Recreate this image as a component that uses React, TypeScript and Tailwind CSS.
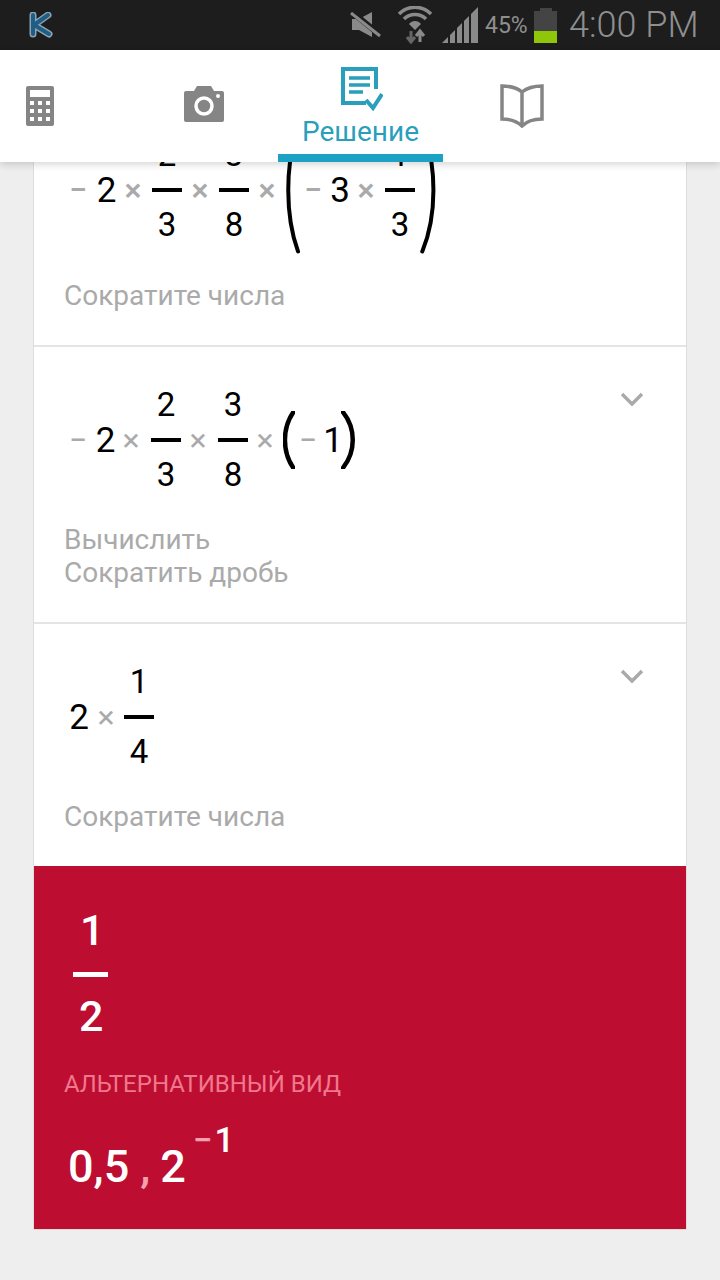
const Sym = ({ c, className = "" }: { c: string; className?: string }) => (
  <span className={`block shrink-0 text-center text-[32px] leading-none text-[#aaaaaa] ${className}`}>{c}</span>
)

const Num = ({ c, className = "" }: { c: string; className?: string }) => (
  <span className={`block shrink-0 text-center text-[35px] leading-none text-black ${className}`}>{c}</span>
)

const Frac = ({ top, bottom, className = "" }: { top: string; bottom: string; className?: string }) => (
  <div className={`flex w-[30px] shrink-0 flex-col items-center ${className}`}>
    <span className="h-[34px] text-[33px] leading-[34px] text-black">{top}</span>
    <div className="mt-4 h-1 w-full bg-black" />
    <span className="mt-4 h-[34px] text-[33px] leading-[34px] text-black">{bottom}</span>
  </div>
)

const Paren = ({ right, tall, className = "" }: { right?: boolean; tall?: boolean; className?: string }) => (
  <svg
    viewBox="0 0 14 100"
    preserveAspectRatio="none"
    className={`shrink-0 text-black ${tall ? "h-[128px]" : "h-[58px]"} ${className}`}
  >
    <path
      d={right ? "M2 2 C15 30 15 70 2 98" : "M12 2 C-1 30 -1 70 12 98"}
      fill="none"
      stroke="currentColor"
      strokeWidth={tall ? 4 : 4.5}
      strokeLinecap="round"
      vectorEffect="non-scaling-stroke"
    />
  </svg>
)

const Chevron = () => (
  <svg viewBox="0 0 24 15" className="absolute top-[45px] right-[42px] h-[15px] w-6 text-[#aaaaaa]">
    <path d="M2 2 L12 12 L22 2" fill="none" stroke="currentColor" strokeWidth="3.4" />
  </svg>
)

const Label = ({ lines }: { lines: string[] }) => (
  <div className="-ml-px text-[28px] leading-[33px] font-normal text-[#aaaaaa]">
    {lines.map((l) => (
      <div key={l}>{l}</div>
    ))}
  </div>
)

const StatusBar = () => (
  <div className="flex h-[50px] items-center bg-[#1d1d1d] pl-[28px] text-[#8f8f8f]">
    <svg viewBox="0 0 26 26" className="h-[26px] w-[26px]">
      <path
        d="M5 3 V22 M20 3 L6 13 L21 22"
        fill="none"
        stroke="#8aa4b4"
        strokeWidth="7"
        strokeLinecap="round"
        strokeLinejoin="round"
      />
      <path
        d="M5 3 V22 M20 3 L6 13 L21 22"
        fill="none"
        stroke="#1f5d85"
        strokeWidth="4"
        strokeLinecap="round"
        strokeLinejoin="round"
      />
    </svg>
    <svg viewBox="0 0 32 28" className="ml-[296px] h-7 w-8">
      <path d="M2 8 H9 L22 1 V26 L9 19 H2 Z" fill="#8a8a8a" />
      <path d="M2 1 L30 24" stroke="#1d1d1d" strokeWidth="6" />
      <path d="M1 2 L30 25" stroke="#8a8a8a" strokeWidth="3" />
    </svg>
    <svg viewBox="0 0 34 38" className="ml-4 h-[38px] w-[34px]">
      <path d="M1 8 C10 -1 24 -1 33 8" fill="none" stroke="#8a8a8a" strokeWidth="3.5" />
      <path d="M6 13 C12 7 22 7 28 13" fill="none" stroke="#8a8a8a" strokeWidth="3.5" />
      <path d="M11 18 C14 14 20 14 23 18 L17 24 Z" fill="#8a8a8a" />
      <path d="M13 25 V35 M9 31 L13 36 L17 31" fill="none" stroke="#666666" strokeWidth="3" />
      <path d="M22 36 V26 M18 30 L22 25 L26 30" fill="none" stroke="#8a8a8a" strokeWidth="3" />
    </svg>
    <svg viewBox="0 0 36 36" className="ml-[10px] h-9 w-9">
      <path d="M0 36 L6 30 V36 Z" fill="#8a8a8a" />
      <path d="M8 28 L13 23 V36 H8 Z" fill="#8a8a8a" />
      <path d="M15 21 L20 16 V36 H15 Z" fill="#8a8a8a" />
      <path d="M22 14 L27 9 V36 H22 Z" fill="#8a8a8a" />
      <path d="M29 7 L36 0 V36 H29 Z" fill="#8a8a8a" />
    </svg>
    <span className="ml-[7px] w-[43px] text-[23px] leading-none">45%</span>
    <div className="ml-[6px] flex h-[35px] w-[23px] flex-col items-center">
      <div className="h-[3px] w-[12px] bg-[#444444]" />
      <div className="h-[20px] w-full bg-[#444444]" />
      <div className="h-[12px] w-full bg-[#8fc60a]" />
    </div>
    <span className="ml-3 text-[36px] leading-none font-light whitespace-nowrap">4:00 PM</span>
  </div>
)

const Header = () => (
  <div className="relative z-10 flex h-[112px] bg-white shadow-[0_2px_8px_rgba(0,0,0,0.18)]">
    <div className="ml-[26px] pt-9">
      <svg viewBox="0 0 28 40" className="h-10 w-7">
        <rect width="28" height="40" rx="2" fill="#858585" />
        <rect x="4" y="4" width="20" height="7" fill="#ffffff" />
        {[15, 23, 31].map((y) =>
          [4, 12, 20].map((x) => <rect key={`${x}-${y}`} x={x} y={y} width="4" height="4" fill="#ffffff" />),
        )}
      </svg>
    </div>
    <div className="ml-[130px] pt-9">
      <svg viewBox="0 0 40 36" className="h-9 w-10">
        <path
          d="M2 5 H10 L13 0 H27 L30 5 H38 Q40 5 40 7 V34 Q40 36 38 36 H2 Q0 36 0 34 V7 Q0 5 2 5 Z"
          fill="#858585"
        />
        <circle cx="20" cy="20" r="8" fill="none" stroke="#ffffff" strokeWidth="3.5" />
        <circle cx="34" cy="10" r="2" fill="#ffffff" />
      </svg>
    </div>
    <div className="ml-[54px] flex w-[165px] flex-col items-center border-b-8 border-[#1ba2c4]">
      <svg viewBox="0 0 42 44" className="mt-[17px] h-11 w-[42px] translate-x-[1px]">
        <path d="M25 36 H2 V2 H35 V22" fill="none" stroke="#2a9fbc" strokeWidth="4" />
        <path d="M8 11 H29 M8 18 H29 M8 25 H22" stroke="#2a9fbc" strokeWidth="3.5" />
        <path d="M25 33 L32 41 L41 27" fill="none" stroke="#2a9fbc" strokeWidth="4" />
      </svg>
      <span className="mt-[6px] text-[28px] leading-[30px] text-[#2a9fbc]">Решение</span>
    </div>
    <div className="ml-[57px] pt-[34px]">
      <svg viewBox="0 0 44 44" className="h-11 w-11">
        <path
          d="M22 8 C17 4 9 2 2 2 V35 C9 35 17 37 22 42 C27 37 35 35 42 35 V2 C35 2 27 4 22 8 Z M22 8 V42"
          fill="none"
          stroke="#858585"
          strokeWidth="3.5"
        />
      </svg>
    </div>
  </div>
)

export default function App() {
  return (
    <div className="h-[1280px] w-[720px] overflow-hidden bg-[#eeeeee] font-['Roboto',sans-serif]">
      <StatusBar />
      <Header />
      <div className="h-[1118px] overflow-hidden">
        <div className="mx-[33px] -mt-[66px] border border-[#dddddd]">
          <section className="relative border-b-2 border-[#e4e4e4] bg-white pt-[41px] pb-[33px] pl-[31px]">
            <div className="flex h-[104px] items-center">
              <Sym c="−" className="w-[26px] font-medium" />
              <Num c="2" className="w-[31px]" />
              <Sym c="×" className="w-[22px] font-medium" />
              <Frac top="2" bottom="3" className="ml-2" />
              <Sym c="×" className="ml-[7px] w-[22px] font-medium" />
              <Frac top="3" bottom="8" className="ml-2" />
              <Sym c="×" className="ml-[7px] w-[22px] font-medium" />
              <Paren tall className="ml-2 w-[14px]" />
              <Sym c="−" className="w-[26px] font-medium" />
              <Num c="3" className="w-[28px]" />
              <Sym c="×" className="ml-px w-[22px] font-medium" />
              <Frac top="1" bottom="3" className="ml-2" />
              <Paren right tall className="ml-[5px] w-4" />
            </div>
            <div className="mt-[37px]">
              <Label lines={["Сократите числа"]} />
            </div>
          </section>

          <section className="relative border-b-2 border-[#e4e4e4] bg-white pt-[41px] pb-[33px] pl-[31px]">
            <Chevron />
            <div className="flex h-[104px] items-center">
              <Sym c="−" className="w-[26px]" />
              <Num c="2" className="w-[29px]" />
              <Sym c="×" className="w-[22px]" />
              <Frac top="2" bottom="3" className="ml-[9px]" />
              <Sym c="×" className="ml-[6px] w-[22px]" />
              <Frac top="3" bottom="8" className="ml-[9px]" />
              <Sym c="×" className="ml-[6px] w-[22px]" />
              <Paren className="ml-[7px] w-3" />
              <Sym c="−" className="w-[26px]" />
              <Num c="1" className="w-6" />
              <Paren right className="-ml-1 w-[14px]" />
            </div>
            <div className="mt-[31px]">
              <Label lines={["Вычислить", "Сократить дробь"]} />
            </div>
          </section>

          <section className="relative bg-white pt-[41px] pb-[33px] pl-[31px]">
            <Chevron />
            <div className="flex h-[104px] items-center">
              <Num c="2" className="w-7" />
              <Sym c="×" className="ml-[2px] w-[22px]" />
              <Frac top="1" bottom="4" className="ml-[7px]" />
            </div>
            <div className="mt-[31px]">
              <Label lines={["Сократите числа"]} />
            </div>
          </section>

          <section className="h-[363px] bg-[#bd0d30] pt-[40px] pl-[31px] font-medium text-white">
            <div className="flex w-[52px] flex-col items-start">
              <span className="ml-[15px] h-[48px] text-[43px] leading-[48px]">1</span>
              <div className="mt-[18px] ml-[8px] h-[5px] w-[35px] bg-white" />
              <span className="mt-[15px] ml-[14px] h-[48px] text-[43px] leading-[48px]">2</span>
            </div>
            <div className="mt-[28px] -ml-px text-[24px] leading-[32px] font-normal text-[#f0788e]">
              АЛЬТЕРНАТИВНЫЙ ВИД
            </div>
            <div className="mt-[13px] flex items-start pl-[3px]">
              <span className="mt-[29px] text-[45px] leading-[50px]">0,5</span>
              <span className="mt-[29px] ml-[11px] text-[45px] leading-[50px] text-[#f4a0b0]">,</span>
              <span className="mt-[29px] ml-[10px] text-[45px] leading-[50px]">2</span>
              <span className="mt-2 ml-[7px] text-[35px] leading-[40px] text-[#f4a0b0]">−</span>
              <span className="mt-2 ml-[2px] text-[35px] leading-[40px]">1</span>
            </div>
          </section>
        </div>
      </div>
    </div>
  )
}
